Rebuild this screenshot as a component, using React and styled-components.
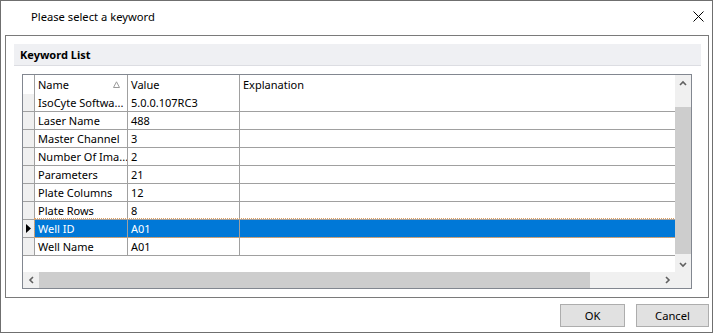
import React from 'react';
import styled, { createGlobalStyle } from 'styled-components';

const GlobalStyle = createGlobalStyle`
  html, body { margin: 0; padding: 0; background: #ffffff; }
  body { font-family: "Noto Sans", "Open Sans", sans-serif; font-size: 11px; color: #000; }
  * { box-sizing: border-box; }
`;

const Dialog = styled.div`
  width: 713px;
  height: 333px;
  border: 1px solid #6f6f6f;
  background: #fff;
  display: flex;
  flex-direction: column;
`;

const TitleBar = styled.div`
  height: 30px;
  display: flex;
  align-items: center;
  justify-content: space-between;
  padding: 0 8px 0 30px;
`;

const Title = styled.span`
  font-size: 11.2px;
  color: #000;
`;

const Body = styled.div`
  flex: 1;
  display: flex;
  flex-direction: column;
  padding: 4px 3px 0 4px;
`;

const GroupBox = styled.div`
  border: 1px solid #7a7a7a;
  padding: 8px 7px 8px 8px;
  display: flex;
  flex-direction: column;
`;

const Band = styled.div`
  height: 22px;
  background: #eff0f3;
  border-bottom: 1px solid #dcdde2;
  display: flex;
  align-items: center;
  padding-left: 6px;
  font-weight: bold;
  font-size: 11px;
`;

const GridFrame = styled.div`
  margin: 8px 9px 0 8px;
  height: 215px;
  border: 1px solid #828790;
  display: grid;
  grid-template-columns: 1fr 16px;
  grid-template-rows: 1fr 16px;
`;

const DataArea = styled.div`
  overflow: hidden;
  background: #fff;
`;

const cols = '12px 93px 112px 1fr';

const HeaderRow = styled.div`
  display: grid;
  grid-template-columns: ${cols};
  height: 19px;
`;

const HeaderCell = styled.div`
  border-right: ${p => (p.$last ? 'none' : '1px solid #a0a0a0')};
  display: flex;
  align-items: center;
  justify-content: space-between;
  padding: 0 7px 0 3px;
  white-space: nowrap;
`;

const Row = styled.div`
  display: grid;
  grid-template-columns: ${cols};
  height: 18px;
  border-bottom: 1px solid #a0a0a0;
  position: relative;
`;

const RowHead = styled.div`
  background: #f0f0f0;
  border-right: 1px solid #a0a0a0;
  display: flex;
  align-items: center;
  justify-content: center;
`;

const Cell = styled.div`
  border-right: ${p => (p.$last ? 'none' : '1px solid #a0a0a0')};
  background: ${p => (p.$sel ? '#0078d7' : '#fff')};
  color: ${p => (p.$sel ? '#fff' : '#000')};
  display: flex;
  align-items: center;
  padding-left: 3px;
  white-space: nowrap;
  overflow: hidden;
  line-height: 17px;
`;

const Focus = styled.div`
  position: absolute;
  left: 12px;
  right: 0;
  top: -1px;
  bottom: 0;
  outline: 1px dotted #e0a060;
  pointer-events: none;
`;

const VScroll = styled.div`
  background: #f0f0f0;
  display: flex;
  flex-direction: column;
`;

const HScroll = styled.div`
  background: #f0f0f0;
  display: flex;
`;

const ArrowBtn = styled.div`
  width: 16px;
  height: 16px;
  flex: none;
  display: flex;
  align-items: center;
  justify-content: center;
`;

const Track = styled.div`
  flex: ${p => (p.$grow ? 1 : 'none')};
  width: ${p => (p.$w ? `${p.$w}px` : 'auto')};
  height: ${p => (p.$h ? `${p.$h}px` : 'auto')};
`;

const Thumb = styled.div`
  background: #cdcdcd;
  flex: none;
  width: ${p => (p.$w ? `${p.$w}px` : '16px')};
  height: ${p => (p.$h ? `${p.$h}px` : '16px')};
`;

const Corner = styled.div`
  background: #f0f0f0;
`;

const ButtonRow = styled.div`
  display: flex;
  justify-content: flex-end;
  gap: 11px;
  padding-top: 6px;
`;

const Button = styled.button`
  width: ${p => p.$w}px;
  height: 23px;
  background: #e1e1e1;
  border: 1px solid #adadad;
  font-family: "Noto Sans", "Open Sans", sans-serif;
  font-size: 11.2px;
  color: #000;
  padding: 0;
`;

const Chevron = ({ dir }) => {
  const paths = {
    up: 'M1 5 L4 2 L7 5',
    down: 'M1 2 L4 5 L7 2',
    left: 'M5 1 L2 4 L5 7',
    right: 'M2 1 L5 4 L2 7',
  };
  const vertical = dir === 'up' || dir === 'down';
  return (
    <svg width={vertical ? 8 : 7} height={vertical ? 7 : 8} viewBox={vertical ? '0 0 8 7' : '0 0 7 8'}>
      <path d={paths[dir]} fill="none" stroke="#606060" strokeWidth="1.6" />
    </svg>
  );
};

const rows = [
  ['IsoCyte Softwa...', '5.0.0.107RC3'],
  ['Laser Name', '488'],
  ['Master Channel', '3'],
  ['Number Of Ima...', '2'],
  ['Parameters', '21'],
  ['Plate Columns', '12'],
  ['Plate Rows', '8'],
  ['Well ID', 'A01'],
  ['Well Name', 'A01'],
];

export default function App() {
  return (
    <>
      <GlobalStyle />
      <Dialog>
        <TitleBar>
          <Title>Please select a keyword</Title>
          <svg width="11" height="11" viewBox="0 0 11 11">
            <path d="M0.5 0.5 L10.5 10.5 M10.5 0.5 L0.5 10.5" stroke="#000" strokeWidth="1" />
          </svg>
        </TitleBar>
        <Body>
          <GroupBox>
            <Band>Keyword List</Band>
            <GridFrame>
              <DataArea>
                <HeaderRow>
                  <HeaderCell />
                  <HeaderCell>
                    <span>Name</span>
                    <svg width="7" height="7" viewBox="0 0 7 7">
                      <path d="M0.5 6.5 L3.5 0.8 L6.5 6.5 Z" fill="none" stroke="#9a9a9a" strokeWidth="1" />
                    </svg>
                  </HeaderCell>
                  <HeaderCell>Value</HeaderCell>
                  <HeaderCell $last>Explanation</HeaderCell>
                </HeaderRow>
                {rows.map(([name, value]) => {
                  const sel = name === 'Well ID';
                  return (
                    <Row key={name}>
                      <RowHead>
                        {sel && (
                          <svg width="5" height="9" viewBox="0 0 5 9">
                            <path d="M0 0 L5 4.5 L0 9 Z" fill="#000" />
                          </svg>
                        )}
                      </RowHead>
                      <Cell $sel={sel}>{name}</Cell>
                      <Cell $sel={sel}>{value}</Cell>
                      <Cell $sel={sel} $last />
                      {sel && <Focus />}
                    </Row>
                  );
                })}
              </DataArea>
              <VScroll>
                <ArrowBtn><Chevron dir="up" /></ArrowBtn>
                <Track $h={16} />
                <Thumb $h={147} />
                <Track $grow />
                <ArrowBtn><Chevron dir="down" /></ArrowBtn>
              </VScroll>
              <HScroll>
                <ArrowBtn><Chevron dir="left" /></ArrowBtn>
                <Thumb $w={551} />
                <Track $grow />
                <ArrowBtn><Chevron dir="right" /></ArrowBtn>
              </HScroll>
              <Corner />
            </GridFrame>
          </GroupBox>
          <ButtonRow>
            <Button $w={65}>OK</Button>
            <Button $w={73}>Cancel</Button>
          </ButtonRow>
        </Body>
      </Dialog>
    </>
  );
}
